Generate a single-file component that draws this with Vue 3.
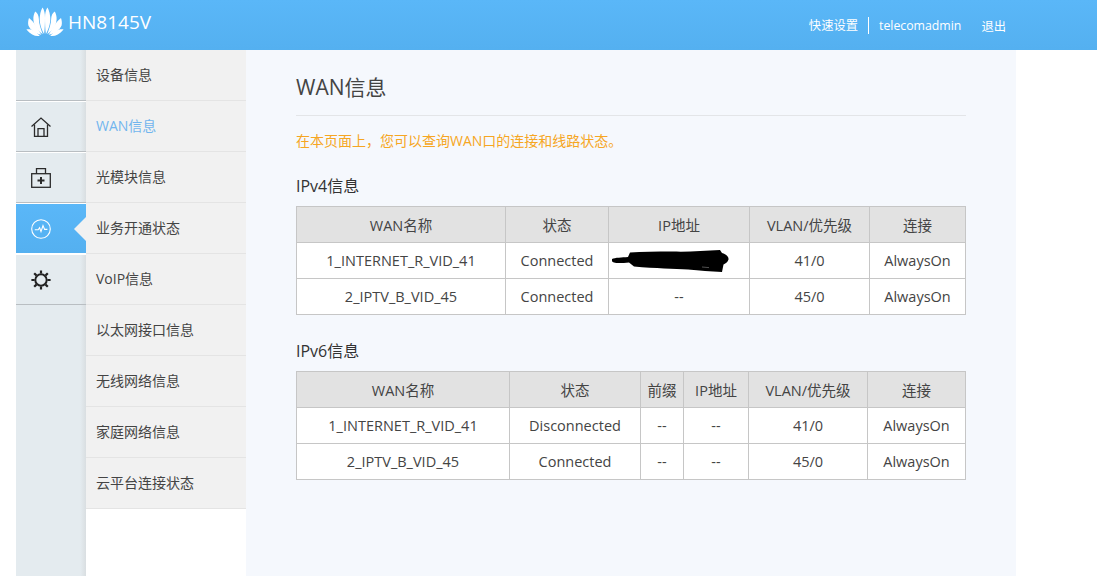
<script setup>
const menu = ['设备信息', 'WAN信息', '光模块信息', '业务开通状态', 'VoIP信息', '以太网接口信息', '无线网络信息', '家庭网络信息', '云平台连接状态']
const v4Cols = [209, 103, 141, 120, 96]
const v6Cols = [213, 131, 43, 65, 119, 98]
const petals = [
  'M19.9 27 C23.4 21 25 14 24 8.5 C23.6 5.4 22.6 2.4 21.4 0.6 C19.8 3 19 6.6 19 10.6 C19 16 19.2 22 19.9 27Z',
  'M21.2 27.2 C26.6 23.4 30.4 18 30.6 12.4 C30.8 9.6 30 7 28.8 4.6 C26.6 6 25.4 8.4 25.2 11.4 C25.2 16.4 23 22.4 21.2 27.2Z',
  'M22.6 27.8 C28.6 26.4 33.8 22.8 35.6 18.4 C36.2 16 35.8 13.4 35 11 C32.2 13.6 30 15.6 28.4 18.4 C26.4 21.4 24.2 25 22.6 27.8Z',
  'M24.2 28.8 C28.6 29.6 33 27.8 37.6 22.4 C34.4 22.2 31.4 22.6 29 24.6 C27.2 25.8 25.8 27.2 24.2 28.8Z'
]
const v4Rows = [
  ['1_INTERNET_R_VID_41', 'Connected', '', '41/0', 'AlwaysOn'],
  ['2_IPTV_B_VID_45', 'Connected', '--', '45/0', 'AlwaysOn']
]
const v6Rows = [
  ['1_INTERNET_R_VID_41', 'Disconnected', '--', '--', '41/0', 'AlwaysOn'],
  ['2_IPTV_B_VID_45', 'Connected', '--', '--', '45/0', 'AlwaysOn']
]
</script>

<template>
  <div class="page">
    <header class="top">
      <div class="brand">
        <svg class="logo" width="38" height="30" viewBox="0 0 38 30">
          <g fill="#fff">
            <path v-for="d in petals" :key="d" :d="d" />
            <path v-for="d in petals" :key="'m' + d" :d="d" transform="translate(38 0) scale(-1 1)" />
          </g>
        </svg>
        <span class="model">HN8145V</span>
      </div>
      <nav class="links">
        <a class="quick">快速设置</a>
        <a class="user">telecomadmin</a>
        <a class="out">退出</a>
      </nav>
    </header>

    <div class="body">
      <aside class="rail">
        <div class="cell"></div>
        <div class="cell">
          <svg width="20" height="20" viewBox="0 0 20 20" fill="none" stroke="#2b2b2b" stroke-width="1.3">
            <path d="M0.5 9.5 L10 1 L19.5 9.5"/>
            <path d="M3.5 7.5 V19.4 H16.5 V7.5"/>
            <path d="M7 19.4 V11.6 H13 V19.4"/>
          </svg>
        </div>
        <div class="cell">
          <svg width="20" height="20" viewBox="0 0 20 20" fill="none" stroke="#2b2b2b" stroke-width="1.3">
            <rect x="0.7" y="5.7" width="18.6" height="13.6" />
            <path d="M5.5 5.7 V0.7 H14.5 V5.7"/>
            <path d="M10 9 V16 M6.5 12.5 H13.5" stroke-width="2"/>
          </svg>
        </div>
        <div class="cell active">
          <svg width="20" height="20" viewBox="0 0 20 20" fill="none" stroke="#fff" stroke-width="1.1">
            <circle cx="10" cy="10" r="9.3"/>
            <path d="M3.8 10.8 H7.2 L8.6 8.8 L10 12.6 L12 6.6 L13.6 10.4 H16.4"/>
          </svg>
          <i class="arrow"></i>
        </div>
        <div class="cell">
          <svg width="20" height="20" viewBox="0 0 20 20" fill="none" stroke="#222">
            <circle cx="10" cy="10" r="5.7" stroke-width="2"/>
            <path stroke-width="2.2" d="M10 0.4 V3.6 M10 16.4 V19.6 M0.4 10 H3.6 M16.4 10 H19.6 M3.2 3.2 L5.4 5.4 M14.6 14.6 L16.8 16.8 M16.8 3.2 L14.6 5.4 M5.4 14.6 L3.2 16.8"/>
          </svg>
        </div>
        <div class="fill"></div>
      </aside>

      <ul class="sub">
        <li v-for="(m, i) in menu" :key="m" :class="{ on: i === 1 }">{{ m }}</li>
      </ul>

      <main class="main">
        <h1>WAN信息</h1>
        <p class="hint">在本页面上，您可以查询WAN口的连接和线路状态。</p>

        <h2>IPv4信息</h2>
        <table>
          <colgroup><col v-for="(w, i) in v4Cols" :key="i" :style="{ width: w + 'px' }" /></colgroup>
          <thead>
            <tr><th>WAN名称</th><th>状态</th><th>IP地址</th><th>VLAN/优先级</th><th>连接</th></tr>
          </thead>
          <tbody>
            <tr v-for="r in v4Rows" :key="r[0]">
              <td v-for="(c, i) in r" :key="i" :class="{ masked: r[0][0] === '1' && i === 2 }">
                {{ c }}
                <svg v-if="r[0][0] === '1' && i === 2" class="scrawl" width="118" height="24" viewBox="0 0 118 24">
                  <path fill="#000" d="M0 10 C3 8.5 10 8.5 16 8 L18 3.5 C30 2.5 44 2.5 60 2.5 C76 3 92 2 108 1 L110 4 C114 5 117 8 116.5 10.5 C116 13 113 15 111.5 15.5 L110 23 C98 22.5 88 21.5 76 20.5 C62 19.5 44 19.5 22 17.5 L17 13.5 C11 14 5 14.5 2 13.5 C0 13 -1 11 0 10Z"/>
                  <path fill="none" stroke="#fff" stroke-width="0.8" opacity="0.4" d="M90 18 L97 18.6"/>
                </svg>
              </td>
            </tr>
          </tbody>
        </table>

        <h2 class="second">IPv6信息</h2>
        <table>
          <colgroup><col v-for="(w, i) in v6Cols" :key="i" :style="{ width: w + 'px' }" /></colgroup>
          <thead>
            <tr><th>WAN名称</th><th>状态</th><th>前缀</th><th>IP地址</th><th>VLAN/优先级</th><th>连接</th></tr>
          </thead>
          <tbody>
            <tr v-for="r in v6Rows" :key="r[0]">
              <td v-for="(c, i) in r" :key="i">{{ c }}</td>
            </tr>
          </tbody>
        </table>
      </main>
    </div>
  </div>
</template>

<style>
html, body { margin: 0; background: #fff; }
</style>

<style scoped>
.page {
  width: 1097px;
  height: 576px;
  overflow: hidden;
  font-family: "Open Sans", "Noto Sans CJK SC", sans-serif;
  font-size: 14px;
  color: #444;
}
.top {
  height: 50px;
  background: linear-gradient(#5ab7f8, #54b0f0);
  display: flex;
  justify-content: space-between;
  color: #fff;
}
.brand {
  display: flex;
  align-items: flex-start;
  padding: 7px 0 0 26px;
}
.logo { display: block; }
.model { font-size: 19px; line-height: 30px; margin-left: 4px; }
.links {
  display: flex;
  align-items: center;
  font-size: 12.3px;
  padding-right: 91px;
  padding-top: 1px;
}
.quick { padding-right: 10px; border-right: 1px solid #fff; line-height: 17px; }
.user { padding: 0 20px 0 10px; }
.body { display: flex; height: 526px; padding-left: 16px; }
.rail {
  width: 70px;
  display: flex;
  flex-direction: column;
  background: #e4ebef;
}
.cell {
  height: 50px;
  flex: none;
  border-bottom: 1px solid #b9bec2;
  display: flex;
  align-items: center;
  padding-left: 15px;
  position: relative;
  background: linear-gradient(to right, #e4ebef 92%, #d9dee1);
}
.cell + .cell { border-top: 1px solid #fff; height: 49px; }
.cell.active { background: linear-gradient(#5ab7f8, #54b0f0); border-bottom-color: #fff; }
.arrow {
  position: absolute;
  right: 0;
  top: 50%;
  margin-top: -12px;
  border: 12px solid transparent;
  border-left-width: 0;
  border-right-color: #f1f1f1;
}
.fill { flex: 1; background: linear-gradient(to right, #e4ebef 92%, #d9dee1); }
.sub {
  list-style: none;
  margin: 0;
  padding: 0;
  width: 160px;
  flex: none;
}
.sub li {
  height: 50px;
  line-height: 49px;
  padding-left: 10px;
  background: #f1f1f1;
  border-bottom: 1px solid #e4e4e4;
  font-size: 14px;
  color: #444;
}
.sub li.on { color: #72b5ee; }
.main {
  width: 670px;
  flex: none;
  padding: 0 50px;
  background: #f5f8fd;
}
h1 {
  margin: 22px 0 0;
  padding-bottom: 12px;
  height: 31px;
  font-size: 21px;
  line-height: 31px;
  font-weight: 400;
  border-bottom: 1px solid #e3e5e8;
  color: #444;
}
.hint { margin: 15px 0 0; height: 21px; line-height: 20px; font-size: 14px; color: #f5a623; }
h2 { margin: 24px 0 9px; font-size: 16px; line-height: 20px; font-weight: 400; color: #333; height: 21px; }
h2.second { margin-top: 26px; }
table {
  border-collapse: collapse;
  table-layout: fixed;
  width: 669px;
  background: #fff;
}
th, td {
  border: 1px solid #c6c6c6;
  height: 35px;
  padding: 0;
  text-align: center;
  font-weight: 400;
  font-size: 14.5px;
}
th { background: #e2e2e2; height: 34px; padding-bottom: 1px; }
.masked { position: relative; }
.scrawl { position: absolute; left: 3px; top: 6px; }
</style>
